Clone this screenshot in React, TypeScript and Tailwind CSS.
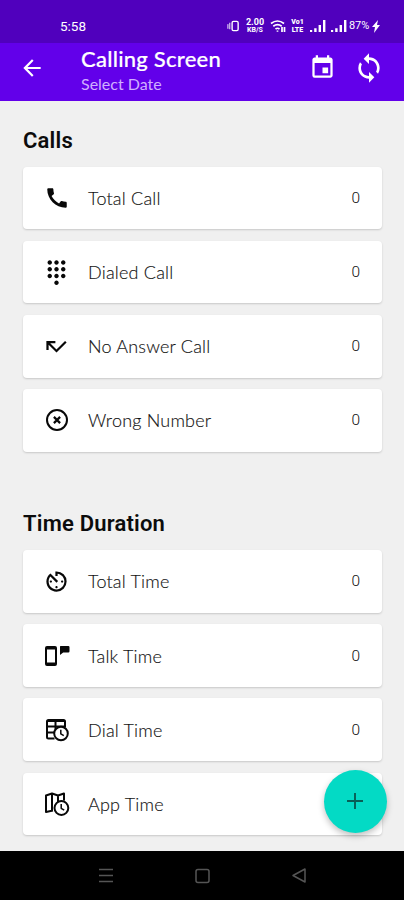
import type { ReactNode } from "react";
import { MdArrowBack, MdAvTimer, MdCall, MdCallMissed, MdDialpad, MdEvent, MdLoop } from "react-icons/md";

type Row = { label: string; icon: ReactNode; hideCount?: boolean };

const WrongIcon = () => (
  <svg viewBox="0 0 24 24" className="size-6" fill="none" stroke="currentColor" strokeWidth="2">
    <circle cx="12" cy="12" r="10" />
    <path d="M8.900 8.900l6.200 6.200M15.100 8.900l-6.200 6.200" strokeWidth="2.200" />
  </svg>
);

const TalkIcon = () => (
  <svg viewBox="0 0 26 22" className="h-[22px] w-[26px]" fill="currentColor">
    <path fillRule="evenodd" d="M3 1h8q2 0 2 2v16q0 2-2 2H3q-2 0-2-2V3q0-2 2-2zM3 4.600v12.800h8V4.600z" />
    <path d="M16.600 1h7.700q1.200 0 1.200 1.200v4q0 1.200-1.200 1.200h-5.100L16 10V1.600q0-.6.600-.6z" />
  </svg>
);

const TableClockIcon = () => (
  <svg viewBox="0 0 24 24" className="size-6" fill="none" stroke="currentColor" strokeWidth="2">
    <path d="M9.500 20.500H3.500q-1.500 0-1.500-1.500V3.500q0-1.500 1.500-1.500h15Q20 2 20 3.500v6M2 8.500h18M2 14.500h7M10.500 3v10" />
    <path d="M2 3h18" />
    <circle cx="16" cy="15.500" r="6.800" fill="white" />
    <path d="M15.800 11.700v4.200l3 1.800" strokeWidth="1.500" />
  </svg>
);

const MapClockIcon = () => (
  <svg viewBox="0 0 26 24" className="h-6 w-[26px]" fill="none" stroke="currentColor" strokeWidth="2" strokeLinejoin="round">
    <path d="M9 18.500L2 20V3.500l6-2 6 2 6-2v7M8 1.500V18M14 3.500v7" />
    <circle cx="17.400" cy="16" r="6.900" fill="white" />
    <path d="M17.200 12v4.300l3 1.900" strokeWidth="1.500" />
  </svg>
);

const calls: Row[] = [
  { label: "Total Call", icon: <MdCall className="size-[26px]" /> },
  { label: "Dialed Call", icon: <MdDialpad className="size-[27px]" /> },
  { label: "No Answer Call", icon: <MdCallMissed className="size-[27px]" /> },
  { label: "Wrong Number", icon: <WrongIcon /> },
];

const durations: Row[] = [
  { label: "Total Time", icon: <MdAvTimer className="size-[27px]" /> },
  { label: "Talk Time", icon: <TalkIcon /> },
  { label: "Dial Time", icon: <TableClockIcon /> },
  { label: "App Time", icon: <MapClockIcon />, hideCount: true },
];

function Section({ title, rows }: { title: string; rows: Row[] }) {
  return (
    <section>
      <h2 className="h-[27px] font-['Roboto',sans-serif] text-[22px] leading-[27px] font-semibold tracking-[0.2px] text-[#0c0c0c]">{title}</h2>
      <ul className="mt-[12.500px] flex flex-col gap-[11.400px]">
        {rows.map((row) => (
          <li key={row.label} className="flex h-[62.800px] items-center rounded-[4px] bg-white pr-[22px] pl-[20px] shadow-[0_1px_2px_rgba(0,0,0,0.17)]">
            <span className="flex w-[27px] shrink-0 justify-center text-[#080808]">{row.icon}</span>
            <span className="ml-[18px] grow text-[18px] leading-6 font-light tracking-[0.200px] text-[#111] [-webkit-text-stroke:0.150px_#222]">{row.label}</span>
            {!row.hideCount && <span className="font-['Roboto',sans-serif] text-[15.500px] leading-5 font-light text-[#111]">0</span>}
          </li>
        ))}
      </ul>
    </section>
  );
}

const Signal = () => (
  <svg viewBox="0 0 16 12" className="h-3 w-4" fill="white">
    <path d="M0 10h2.200v2H0zM4.200 8.200h2.400V12H4.200zM8.600 5h2.400v7H8.600zM13 0h2.400v12H13z" />
  </svg>
);

function StatusBar() {
  return (
    <div className="flex h-[43px] shrink-0 items-end bg-[#5000bd] pr-[24px] pb-[9px] pl-[60px] font-['Roboto',sans-serif] text-white">
      <span className="text-[13.500px] leading-[16px]">5:58</span>
      <div className="ml-auto flex h-4 items-center">
        <svg viewBox="0 0 14 12" className="mr-[5px] h-3 w-[13px]" fill="none" stroke="white" strokeWidth="1.500">
          <path d="M1 4v5M3 2.500v7" strokeWidth="1" />
          <rect x="5.500" y="1" width="6.500" height="10" rx="1.500" />
        </svg>
        <div className="mr-[5px] flex w-5 flex-col items-center font-bold">
          <span className="text-[9px] leading-[8px]">2.00</span>
          <span className="text-[7px] leading-[8px]">KB/S</span>
        </div>
        <svg viewBox="0 0 16 14" className="mr-1 h-[14px] w-4" fill="none" stroke="white" strokeWidth="1.700">
          <path d="M1 4.500q6.500-5 13 0M3.300 7.300q4.200-3.200 8.400 0M5.500 10q2-1.500 4 0" />
          <path d="M7.500 11.500v1.200M12 8v5M14.500 8v5" />
        </svg>
        <div className="mr-[5px] flex w-[15px] flex-col items-center font-black">
          <span className="text-[7px] leading-[8px]">Vo1</span>
          <span className="text-[7px] leading-[8px]">LTE</span>
        </div>
        <Signal />
        <span className="ml-[5px] flex"><Signal /></span>
        <span className="ml-[2px] w-[23px] text-[11px] leading-3 tracking-[-0.100px]">87%</span>
        <svg viewBox="0 0 8 13" className="h-[13px] w-2" fill="white"><path d="M6 0L0 7h3L2 13l6-8H5z" /></svg>
      </div>
    </div>
  );
}

export default function App() {
  return (
    <div className="relative flex h-[900px] w-[404px] flex-col overflow-hidden bg-[#f0f0f0] font-['Lato',sans-serif]">
      <StatusBar />
      <header className="flex h-[58px] shrink-0 items-start bg-[#6200ea] text-white">
        <MdArrowBack className="mt-[12px] ml-[19px] size-[26px]" />
        <div className="ml-[36px] grow">
          <h1 className="mt-[2px] text-[22px] leading-[28px] font-medium tracking-[0.250px] [-webkit-text-stroke:0.200px_white]">Calling Screen</h1>
          <p className="-mt-px text-[16px] leading-[23px] text-[#cfafff]">Select Date</p>
        </div>
        <MdEvent className="mt-[11px] mr-[17px] size-[27px]" />
        <MdLoop className="mt-[9px] mr-[19px] size-[32px]" />
      </header>
      <main className="flex min-h-0 grow flex-col gap-[58.600px] pt-[26px] pr-[22px] pl-[23px]">
        <Section title="Calls" rows={calls} />
        <Section title="Time Duration" rows={durations} />
      </main>
      <nav className="flex h-[49px] shrink-0 items-center bg-black">
        <svg viewBox="0 0 404 49" className="h-[49px] w-full" fill="none" stroke="#555" strokeWidth="1.500">
          <path d="M99 18.500h14M99 24.500h14M99 30.500h14" />
          <rect x="196" y="18.500" width="13" height="13" rx="2" />
          <path d="M293 24.500l12-6.500v13z" strokeLinejoin="round" />
        </svg>
      </nav>
      <button aria-label="Add" className="absolute right-[17.500px] bottom-[67.500px] flex size-[63px] items-center justify-center rounded-full bg-[#03dac5] shadow-[0_3px_6px_rgba(0,0,0,0.25)]">
        <svg viewBox="0 0 16 16" className="size-4" stroke="#085e55" strokeWidth="1.900"><path d="M8 0v16M0 8h16" /></svg>
      </button>
    </div>
  );
}
